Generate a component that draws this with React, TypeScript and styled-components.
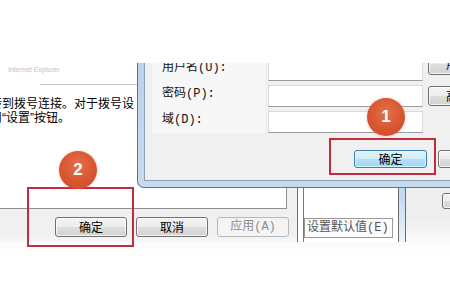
import React from "react";
import styled, { createGlobalStyle, css } from "styled-components";

const Global = createGlobalStyle`
  html, body { margin: 0; padding: 0; background: #ffffff; }
  body { font-family: "Noto Sans CJK SC", sans-serif; }
`;

const Page = styled.div`
  position: relative;
  width: 450px;
  height: 300px;
  overflow: hidden;
  background: #ffffff;
  display: flex;
  flex-direction: column;
`;

const TopBlank = styled.div`
  height: 63px;
  flex: none;
`;

const Screen = styled.div`
  position: relative;
  height: 179px;
  flex: none;
  overflow: hidden;
  background: #ffffff;
`;

const BottomBlank = styled.div`
  flex: 1;
  background: linear-gradient(#fbfbfb, #ffffff 30%);
`;

/* ---------- buttons ---------- */
type Variant = "normal" | "focus" | "disabled" | "plain";

const WinButton = styled.div<{ $w: number; $h: number; $variant?: Variant; $shift?: number }>`
  box-sizing: border-box;
  flex: none;
  width: ${(p) => p.$w}px;
  height: ${(p) => p.$h}px;
  margin-top: ${(p) => p.$shift ?? 0}px;
  border-radius: 3px;
  display: flex;
  align-items: center;
  justify-content: center;
  font-size: 12px;
  line-height: 1;
  color: #000;
  white-space: nowrap;
  overflow: hidden;
  border: 1px solid #707070;
  background: linear-gradient(#f4f4f4 0%, #ececec 50%, #dedede 50%, #d2d2d2 100%);
  box-shadow: inset 0 0 0 1px rgba(255, 255, 255, 0.75);
  ${(p) =>
    p.$variant === "focus" &&
    css`
      border-color: #3c7fb1;
      background: linear-gradient(#e3f4fc 0%, #cdebf9 50%, #b4e0f6 50%, #a2d6f1 100%);
      box-shadow: inset 0 0 0 1px rgba(220, 245, 255, 0.9);
    `}
  ${(p) =>
    p.$variant === "disabled" &&
    css`
      border-color: #b5b9bc;
      background: #f4f4f4;
      color: #8d8d8d;
      box-shadow: none;
    `}
  ${(p) =>
    p.$variant === "plain" &&
    css`
      border-color: #9a9a9a;
      border-radius: 0;
      background: #fbfbfb;
      color: #555;
      box-shadow: none;
      justify-content: flex-start;
      padding-left: 2px;
    `}
`;

const MonoText = styled.span`
  font-family: "Liberation Mono", "Noto Sans CJK SC", monospace;
  font-size: 12px;
`;

/* ---------- back dialog ---------- */
const BackDialog = styled.div`
  position: absolute;
  left: -10px;
  top: 0;
  width: 307px;
  height: 179px;
  display: flex;
  flex-direction: column;
  background: #f0f0f0;
`;

const TabPage = styled.div`
  flex: 1;
  background: #ffffff;
  margin-right: 10px;
  border-right: 1px solid #8d9094;
  border-bottom: 1px solid #8d9094;
  padding-top: 2px;
  display: flex;
  flex-direction: column;
`;

const Caption = styled.div`
  margin-left: 18px;
  font-family: "Liberation Sans", sans-serif;
  font-size: 7px;
  line-height: 9px;
  color: #c2c2c2;
`;

const Rule = styled.div`
  margin: 10px 0 0 50px;
  height: 1px;
  background: #c4c4c4;
`;

const Paragraph = styled.div`
  margin-top: 12px;
  font-family: "Liberation Sans", "Noto Sans CJK SC", sans-serif;
  font-size: 12px;
  line-height: 14px;
  color: #000;
  white-space: nowrap;
`;

const Footer = styled.div`
  height: 33px;
  flex: none;
  display: flex;
  justify-content: flex-end;
  align-items: flex-start;
  gap: 9px;
  padding: 8px 8px 0 0;
  box-sizing: border-box;
  background: linear-gradient(#f0f0f0 75%, #f8f8f8);
`;

/* ---------- middle & right windows ---------- */
const MiddleWindow = styled.div`
  position: absolute;
  left: 297px;
  top: 100px;
  width: 109px;
  height: 79px;
  box-sizing: border-box;
  border-left: 1px solid #727272;
  background: #ffffff;
  display: flex;
`;

const Pane = styled.div`
  flex: 1;
  margin-left: 5px;
  border-left: 1px solid #7a7a7a;
  padding-top: 55px;
  display: flex;
  align-items: flex-start;
`;

const FrameStrip = styled.div`
  width: 6px;
  flex: none;
  border-left: 1px solid #6c6c6c;
  border-right: 1px solid #6c6c6c;
  background: linear-gradient(#c3d9ef 40%, #eef4fa);
`;

const RightWindow = styled.div`
  position: absolute;
  left: 406px;
  top: 120px;
  width: 60px;
  height: 59px;
  background: linear-gradient(#eeeeee 60%, #fafafa);
  display: flex;
  align-items: flex-start;
  padding: 10px 0 0 36px;
  box-sizing: border-box;
`;

/* ---------- front dialog ---------- */
const FrontDialog = styled.div`
  position: absolute;
  left: 137px;
  top: -30px;
  width: 330px;
  height: 155px;
  box-sizing: border-box;
  border: 1px solid #5f7288;
  border-top: none;
  border-radius: 0 0 0 7px;
  background: linear-gradient(#b9d0e8, #c8dbee);
  padding: 0 6px 6px 6px;
  display: flex;
`;

const FrontBody = styled.div`
  flex: 1;
  background: #f0f0f0;
  border: 1px solid #8ba2ba;
  display: flex;
  flex-direction: column;
`;

const FormPanel = styled.div`
  margin-left: 7px;
  padding: 25px 0 0 10px;
  background: linear-gradient(90deg, #f7f7f7 0 113px, transparent 113px);
`;

const FormGrid = styled.div`
  display: grid;
  grid-template-columns: 101px 155px 60px;
  grid-auto-rows: 22px;
  column-gap: 5px;
  row-gap: 4px;
`;

const Label = styled.div`
  align-self: center;
  padding-bottom: 5px;
  font-family: "Liberation Mono", "Noto Sans CJK SC", monospace;
  font-size: 12px;
  line-height: 14px;
  color: #111;
  white-space: nowrap;
`;

const Field = styled.div`
  box-sizing: border-box;
  background: #ffffff;
  border: 1px solid #dadada;
  border-bottom-color: #9c9c9c;
`;

const ButtonRow = styled.div`
  margin-top: auto;
  display: flex;
  gap: 11px;
  padding: 0 0 12px 209px;
`;

/* ---------- overlays ---------- */
const Badge = styled.div<{ $x: number; $y: number }>`
  position: absolute;
  left: ${(p) => p.$x}px;
  top: ${(p) => p.$y}px;
  width: 38px;
  height: 38px;
  border-radius: 50%;
  background: radial-gradient(circle at 50% 38%, #e5704a 0%, #d75630 55%, #c94a2a 100%);
  box-shadow: 0 0 3px rgba(210, 90, 50, 0.35);
  color: #ffffff;
  font-family: "Liberation Sans", sans-serif;
  font-weight: bold;
  font-size: 17px;
  display: flex;
  align-items: center;
  justify-content: center;
`;

const Highlight = styled.div<{ $x: number; $y: number; $w: number; $h: number }>`
  position: absolute;
  left: ${(p) => p.$x}px;
  top: ${(p) => p.$y}px;
  width: ${(p) => p.$w}px;
  height: ${(p) => p.$h}px;
  box-sizing: border-box;
  border: 2px solid #c22c3e;
`;

const fields = [
  { label: "用户名(U):", side: "用户", sideH: 22, shift: -6 },
  { label: "密码(P):", side: "高级", sideH: 20, shift: 1 },
  { label: "域(D):", side: "", sideH: 0, shift: 0 },
];

export default function App() {
  return (
    <Page>
      <Global />
      <TopBlank />
      <Screen>
        <BackDialog>
          <TabPage>
            <Caption>Internet Explorer</Caption>
            <Rule />
            <Paragraph>
              转到拨号连接。对于拨号设
              <br />
              用“设置”按钮。
            </Paragraph>
          </TabPage>
          <Footer>
            <WinButton $w={72} $h={20}>确定</WinButton>
            <WinButton $w={72} $h={20}>取消</WinButton>
            <WinButton $w={72} $h={20} $variant="disabled">
              <MonoText>应用(A)</MonoText>
            </WinButton>
          </Footer>
        </BackDialog>

        <MiddleWindow>
          <Pane>
            <WinButton $w={89} $h={20} $variant="plain">
              <MonoText>设置默认值(E)</MonoText>
            </WinButton>
          </Pane>
          <FrameStrip />
        </MiddleWindow>

        <RightWindow>
          <WinButton $w={20} $h={16} />
        </RightWindow>

        <FrontDialog>
          <FrontBody>
            <FormPanel>
              <FormGrid>
                {fields.map((f) => (
                  <React.Fragment key={f.label}>
                    <Label>{f.label}</Label>
                    <Field />
                    {f.sideH ? (
                      <WinButton $w={60} $h={f.sideH} $shift={f.shift}>
                        {f.side}
                      </WinButton>
                    ) : (
                      <div />
                    )}
                  </React.Fragment>
                ))}
              </FormGrid>
            </FormPanel>
            <ButtonRow>
              <WinButton $w={73} $h={18} $variant="focus">确定</WinButton>
              <WinButton $w={73} $h={18}>取消</WinButton>
            </ButtonRow>
          </FrontBody>
        </FrontDialog>
      </Screen>
      <BottomBlank />

      <Highlight $x={329} $y={138} $w={107} $h={37} />
      <Highlight $x={27} $y={187} $w={107} $h={60} />
      <Badge $x={367} $y={98}>1</Badge>
      <Badge $x={59} $y={151}>2</Badge>
    </Page>
  );
}
